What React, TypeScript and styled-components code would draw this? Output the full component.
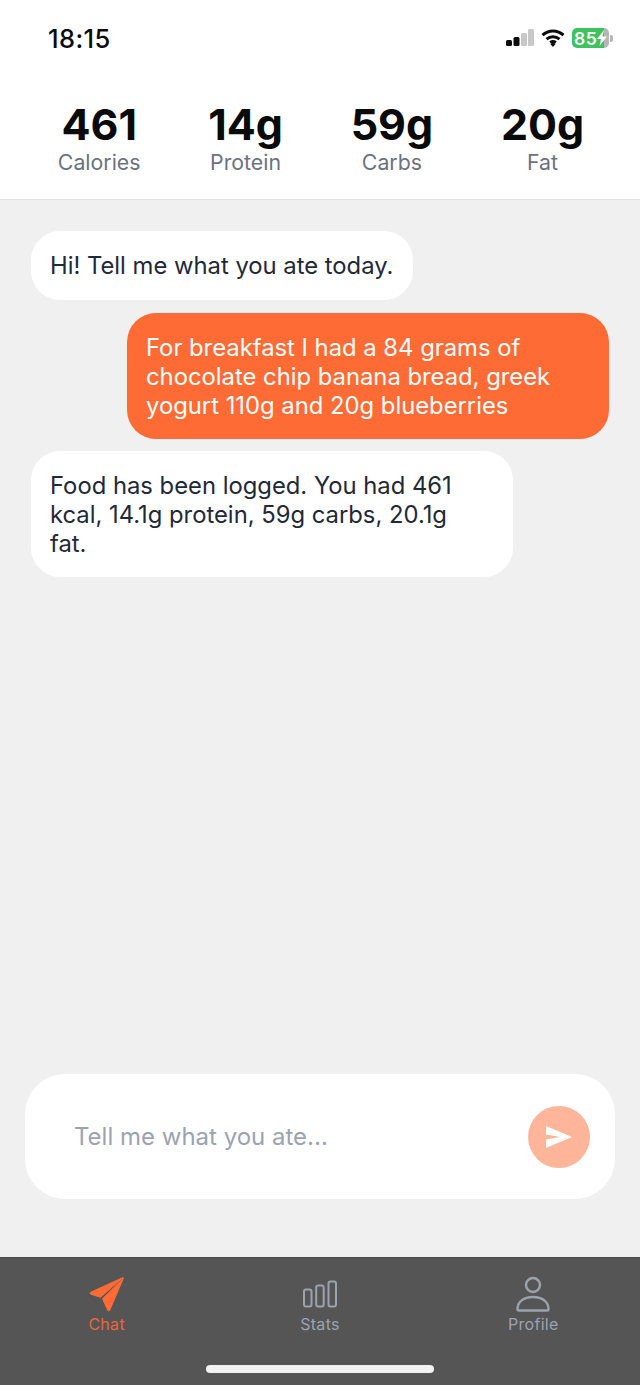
import React from "react";
import styled, { createGlobalStyle } from "styled-components";

const GlobalStyle = createGlobalStyle`
  html, body {
    margin: 0;
    padding: 0;
    background: #f0f0f0;
  }
  * {
    box-sizing: border-box;
  }
`;

const Screen = styled.div`
  display: flex;
  flex-direction: column;
  width: 640px;
  height: 1385px;
  overflow: hidden;
  background: #f0f0f0;
  font-family: Inter, "Liberation Sans", sans-serif;
`;

const Header = styled.header`
  flex: none;
  height: 200px;
  background: #fff;
  border-bottom: 1px solid #dfdfdf;
`;

const StatusBar = styled.div`
  display: flex;
  align-items: center;
  justify-content: space-between;
  height: 40px;
  margin-top: 18px;
  padding: 0 27px 0 48px;
`;

const Clock = styled.span`
  font-size: 25.5px;
  font-weight: 500;
  letter-spacing: 0.4px;
  color: #0b0b0b;
`;

const StatusIcons = styled.div`
  display: flex;
  align-items: center;
  gap: 7px;
`;

const Battery = styled.div`
  display: flex;
  align-items: center;
  gap: 1px;
`;

const BatteryBody = styled.div`
  display: flex;
  align-items: center;
  width: 37px;
  height: 20px;
  padding-left: 2px;
  border-radius: 5px;
  overflow: hidden;
  background: linear-gradient(to right, #3ec25f 0 87%, #b5b5b5 87%);
  font-size: 17.5px;
  font-weight: 600;
  letter-spacing: 0.5px;
  color: #fff;
`;

const BatteryCap = styled.div`
  width: 3px;
  height: 7px;
  border-radius: 0 2px 2px 0;
  background: #b5b5b5;
`;

const Stats = styled.div`
  display: flex;
  justify-content: space-around;
  margin-top: 41px;
  padding: 0 22px 0 24px;
`;

const Stat = styled.div`
  display: flex;
  flex-direction: column;
  align-items: center;
`;

const StatValue = styled.span`
  font-size: 43px;
  line-height: 50px;
  font-weight: 700;
  color: #0a0a0a;
`;

const StatLabel = styled.span`
  font-size: 21.3px;
  line-height: 26px;
  color: #6b7280;
`;

const Messages = styled.main`
  flex: 1;
  display: flex;
  flex-direction: column;
  gap: 12.5px;
  padding: 31px 31px 0;
`;

const Bubble = styled.div<{ $user?: boolean; $wide?: boolean }>`
  align-self: ${(p) => (p.$user ? "flex-end" : "flex-start")};
  width: ${(p) => (p.$wide ? "482px" : "auto")};
  max-width: 482px;
  min-height: 69px;
  padding: 20px ${(p) => (p.$wide ? "28px" : "20px")} 19px 19px;
  border-radius: 29px;
  font-size: 23.8px;
  line-height: 29px;
  background: ${(p) => (p.$user ? "#ff6b35" : "#fff")};
  color: ${(p) => (p.$user ? "#fff" : "#1f2937")};
`;

const Composer = styled.div`
  flex: none;
  display: flex;
  align-items: center;
  justify-content: space-between;
  height: 125px;
  margin: 0 25px 58px;
  padding: 0 25px 0 49px;
  border-radius: 40px;
  background: #fff;
`;

const Placeholder = styled.span`
  font-size: 24px;
  color: #9ca3af;
`;

const SendButton = styled.button`
  display: flex;
  align-items: center;
  justify-content: center;
  width: 62px;
  height: 62px;
  padding: 0;
  border: none;
  border-radius: 50%;
  background: #ffb59a;
`;

const TabBar = styled.nav`
  flex: none;
  position: relative;
  display: grid;
  grid-template-columns: repeat(3, 1fr);
  height: 128px;
  border-top: 1px solid #4c4c4c;
  background: #555;
`;

const Tab = styled.div<{ $active?: boolean }>`
  display: flex;
  flex-direction: column;
  align-items: center;
  padding-top: 18px;
  font-size: 16px;
  font-weight: 400;
  letter-spacing: 0.3px;
  line-height: 20px;
  color: ${(p) => (p.$active ? "#e8683a" : "#9ca3af")};
`;

const TabIcon = styled.div`
  display: flex;
  align-items: center;
  justify-content: center;
  height: 36px;
  margin-bottom: 2px;
`;

const HomeIndicator = styled.div`
  position: absolute;
  left: 206px;
  bottom: 12px;
  width: 228px;
  height: 8px;
  border-radius: 4px;
  background: #f2f2f2;
`;

const stats = [
  { value: "461", label: "Calories" },
  { value: "14g", label: "Protein" },
  { value: "59g", label: "Carbs" },
  { value: "20g", label: "Fat" },
];

const SignalIcon = () => (
  <svg width="28" height="18" viewBox="0 0 28 18">
    <rect x="0" y="11" width="6" height="6" rx="1.5" fill="#0b0b0b" />
    <rect x="7.5" y="8" width="6" height="9" rx="1.5" fill="#0b0b0b" />
    <rect x="15" y="4" width="6" height="13" rx="1.5" fill="#c8c8c8" />
    <rect x="22" y="0" width="6" height="17" rx="1.5" fill="#c8c8c8" />
  </svg>
);

const WifiIcon = () => (
  <svg width="24" height="18" viewBox="0 0 24 18" fill="none" stroke="#0b0b0b" strokeWidth="3">
    <path d="M1.5 6.2C7.5.6 16.5.6 22.5 6.2" />
    <path d="M5.5 10.2c3.8-3.3 9.2-3.3 13 0" />
    <path d="M9.2 13.6c1.7-1.2 3.9-1.2 5.6 0" />
    <path d="M12 18l-2.6-3a4 4 0 0 1 5.2 0z" fill="#0b0b0b" stroke="none" />
  </svg>
);

const BoltIcon = () => (
  <svg width="10" height="16" viewBox="0 0 10 16">
    <path d="M7 0 0 9h4l-1.500 7L10 6.500H5.500z" fill="#fff" />
  </svg>
);

const PlaneIcon = () => (
  <svg width="36" height="36" viewBox="0 0 36 36">
    <path
      d="M34 1.5 1.8 16.2c-1 .5-.9 1.700.2 2l9.500 3.100L34 1.500z"
      fill="#ff6b35"
      stroke="#ff6b35"
      strokeWidth="1"
      strokeLinejoin="round"
    />
    <path
      d="M34.500 2 13.500 22.800l5.300 11.500c.5 1 1.700.9 2-.2L34.500 2z"
      fill="#ff6b35"
      stroke="#ff6b35"
      strokeWidth="1"
      strokeLinejoin="round"
    />
  </svg>
);

const BarsIcon = () => (
  <svg width="36" height="28" viewBox="0 0 36 28" fill="none" stroke="#9ca3af" strokeWidth="2">
    <rect x="2" y="9.500" width="7.500" height="17" rx="2" />
    <rect x="14.200" y="5.500" width="7.500" height="21" rx="2" />
    <rect x="26.500" y="1.500" width="7.500" height="25" rx="2" />
  </svg>
);

const PersonIcon = () => (
  <svg width="36" height="36" viewBox="0 0 36 36" fill="none" stroke="#9ca3af" strokeWidth="2.400">
    <circle cx="18" cy="9" r="7" />
    <path d="M2.500 33c0-7 6-12 15.500-12s15.500 5 15.500 12c0 1-.5 1.500-1.500 1.500H4c-1 0-1.500-.5-1.500-1.500z" />
  </svg>
);

const SendIcon = () => (
  <svg width="28" height="24" viewBox="0 0 28 24">
    <path d="M1 1 27 12 1 23l0-8.500L15 12 1 9.500z" fill="#fff" />
  </svg>
);

export default function App() {
  return (
    <Screen>
      <GlobalStyle />
      <Header>
        <StatusBar>
          <Clock>18:15</Clock>
          <StatusIcons>
            <SignalIcon />
            <WifiIcon />
            <Battery>
              <BatteryBody>
                85
                <BoltIcon />
              </BatteryBody>
              <BatteryCap />
            </Battery>
          </StatusIcons>
        </StatusBar>
        <Stats>
          {stats.map((s) => (
            <Stat key={s.label}>
              <StatValue>{s.value}</StatValue>
              <StatLabel>{s.label}</StatLabel>
            </Stat>
          ))}
        </Stats>
      </Header>
      <Messages>
        <Bubble>Hi! Tell me what you ate today.</Bubble>
        <Bubble $user>For breakfast I had a 84 grams of chocolate chip banana bread, greek yogurt 110g and 20g blueberries</Bubble>
        <Bubble $wide>Food has been logged. You had 461 kcal, 14.1g protein, 59g carbs, 20.1g fat.</Bubble>
      </Messages>
      <Composer>
        <Placeholder>Tell me what you ate...</Placeholder>
        <SendButton>
          <SendIcon />
        </SendButton>
      </Composer>
      <TabBar>
        <Tab $active>
          <TabIcon>
            <PlaneIcon />
          </TabIcon>
          Chat
        </Tab>
        <Tab>
          <TabIcon>
            <BarsIcon />
          </TabIcon>
          Stats
        </Tab>
        <Tab>
          <TabIcon>
            <PersonIcon />
          </TabIcon>
          Profile
        </Tab>
        <HomeIndicator />
      </TabBar>
    </Screen>
  );
}
